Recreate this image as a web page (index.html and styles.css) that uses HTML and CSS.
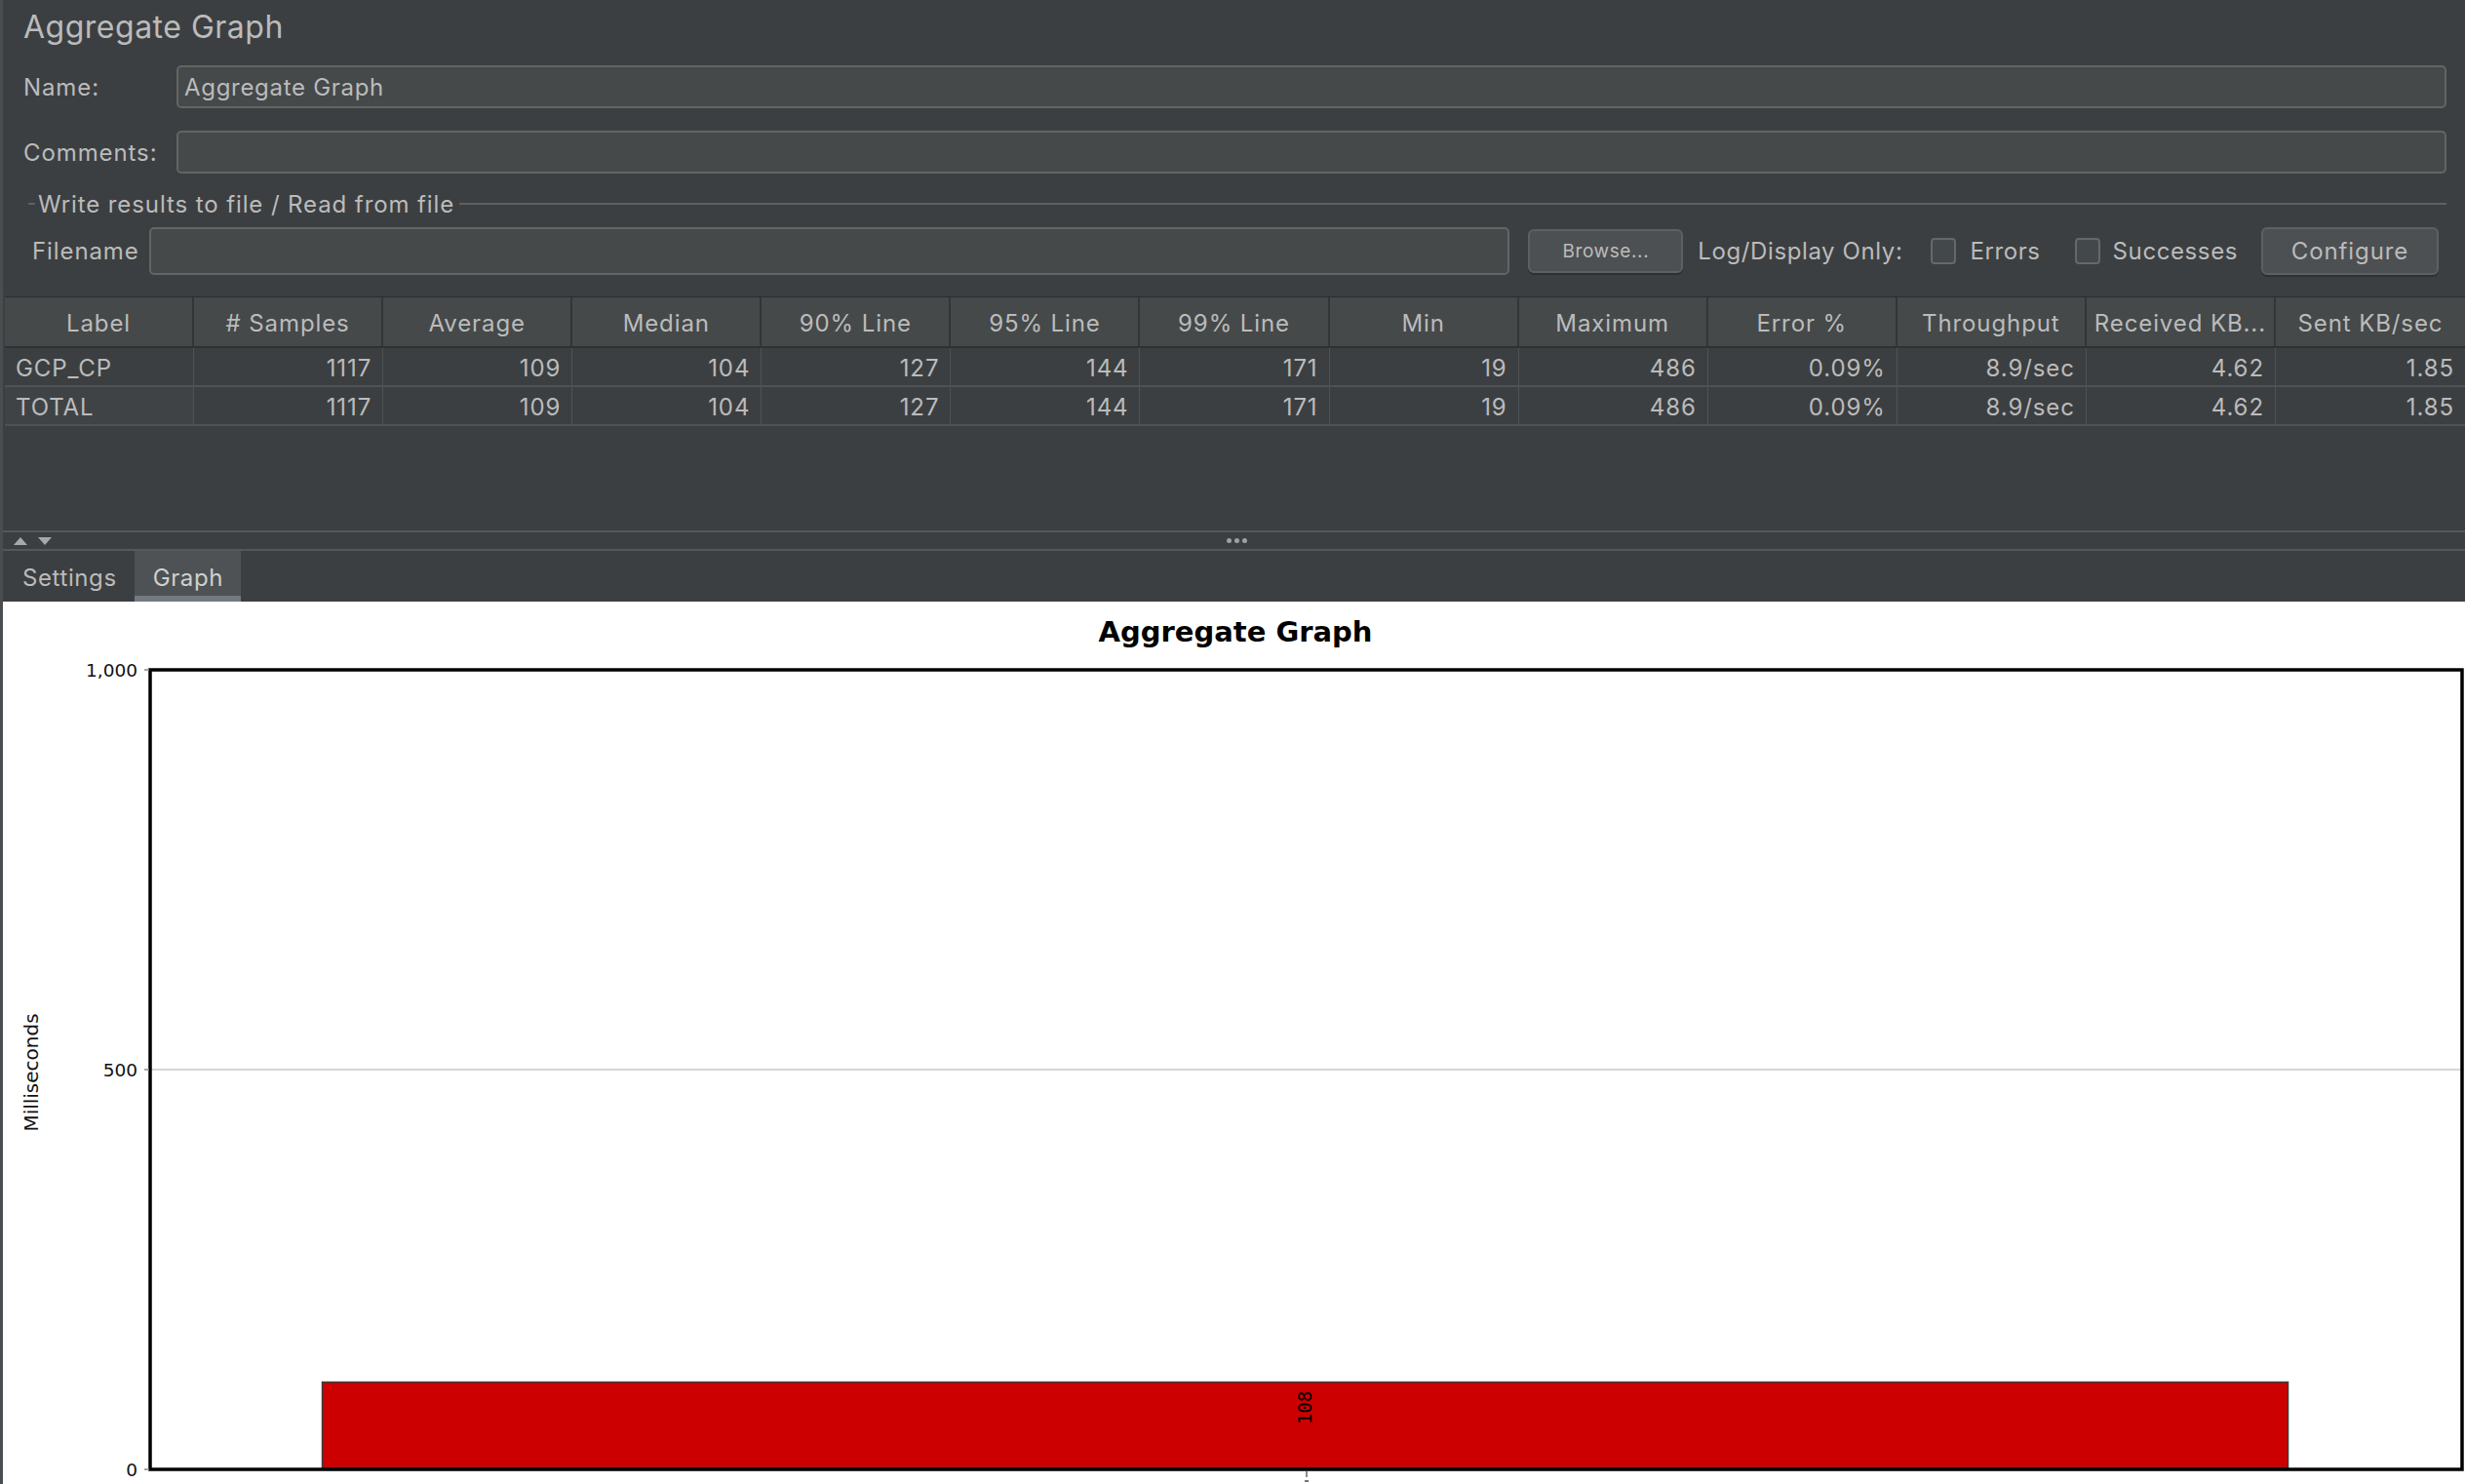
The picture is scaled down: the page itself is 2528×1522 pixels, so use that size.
FILE: index.html
```html
<!DOCTYPE html>
<html lang="en">
<head>
<meta charset="utf-8">
<title>Aggregate Graph</title>
<link rel="stylesheet" href="styles.css">
</head>
<body>
<div class="window">
  <div class="config">
    <div class="title">Aggregate Graph</div>
    <div class="form-row">
      <span class="lbl">Name:</span>
      <div class="field">Aggregate Graph</div>
    </div>
    <div class="form-row">
      <span class="lbl">Comments:</span>
      <div class="field"></div>
    </div>
    <div class="group">
      <div class="group-title">
        <span class="gline short"></span>
        <span class="gtext">Write results to file / Read from file</span>
        <span class="gline long"></span>
      </div>
      <div class="file-row">
        <span class="flabel">Filename</span>
        <div class="field ffield"></div>
        <button class="btn browse">Browse...</button>
        <span class="log">Log/Display Only:</span>
        <span class="cb cb1"></span><span class="cbl">Errors</span>
        <span class="cb cb2"></span><span class="cbl cbl2">Successes</span>
        <button class="btn configure">Configure</button>
      </div>
    </div>
  </div>

  <div class="table-area">
    <div class="trow thead">
      <div class="c">Label</div>
      <div class="c"># Samples</div>
      <div class="c">Average</div>
      <div class="c">Median</div>
      <div class="c">90% Line</div>
      <div class="c">95% Line</div>
      <div class="c">99% Line</div>
      <div class="c">Min</div>
      <div class="c">Maximum</div>
      <div class="c">Error %</div>
      <div class="c">Throughput</div>
      <div class="c">Received KB...</div>
      <div class="c">Sent KB/sec</div>
    </div>
    <div class="trow tbody">
      <div class="c label">GCP_CP</div>
      <div class="c">1117</div>
      <div class="c">109</div>
      <div class="c">104</div>
      <div class="c">127</div>
      <div class="c">144</div>
      <div class="c">171</div>
      <div class="c">19</div>
      <div class="c">486</div>
      <div class="c">0.09%</div>
      <div class="c">8.9/sec</div>
      <div class="c">4.62</div>
      <div class="c">1.85</div>
    </div>
    <div class="trow tbody">
      <div class="c label total">TOTAL</div>
      <div class="c">1117</div>
      <div class="c">109</div>
      <div class="c">104</div>
      <div class="c">127</div>
      <div class="c">144</div>
      <div class="c">171</div>
      <div class="c">19</div>
      <div class="c">486</div>
      <div class="c">0.09%</div>
      <div class="c">8.9/sec</div>
      <div class="c">4.62</div>
      <div class="c">1.85</div>
    </div>
  </div>

  <div class="splitter">
    <div class="arrows"><span class="tri up"></span><span class="tri down"></span></div>
    <div class="dots"><span></span><span></span><span></span></div>
    <div></div>
  </div>

  <div class="tabs">
    <div class="tab">Settings</div>
    <div class="tab active">Graph</div>
  </div>

  <div class="chart">
    <svg class="plot" width="2525" height="904" viewBox="0 0 2525 904">
      <text class="ctitle" x="1264" y="41" text-anchor="middle">Aggregate Graph</text>
      <line x1="152" y1="480" x2="2521" y2="480" stroke="#c8c8c8" stroke-width="1.6"/>
      <rect x="327.5" y="800.5" width="2016" height="88" fill="#cc0000" stroke="#3a3a3a" stroke-width="1.5"/>
      <rect x="151" y="70" width="2371" height="820" fill="none" stroke="#000" stroke-width="3.5"/>
      <line x1="145" y1="70" x2="150" y2="70" stroke="#888" stroke-width="1.5"/>
      <line x1="145" y1="480" x2="150" y2="480" stroke="#888" stroke-width="1.5"/>
      <line x1="145" y1="890" x2="150" y2="890" stroke="#888" stroke-width="1.5"/>
      <text class="tick" x="138" y="76.5" text-anchor="end">1,000</text>
      <text class="tick" x="138" y="486.5" text-anchor="end">500</text>
      <text class="tick" x="138" y="896.5" text-anchor="end">0</text>
      <text class="ylabel" transform="translate(36 483) rotate(-90)" text-anchor="middle">Milliseconds</text>
      <text class="barval" transform="translate(1342 844) rotate(-90)">108</text>
      <line x1="1337" y1="892" x2="1337" y2="898" stroke="#666" stroke-width="1.5"/>
      <line x1="1335" y1="902" x2="1339" y2="902" stroke="#444" stroke-width="1.5"/>
    </svg>
  </div>
</div>
</body>
</html>
```
FILE: styles.css
```css
* { box-sizing: border-box; }
html, body { margin: 0; padding: 0; }
body {
  background: #3c3f41;
  width: 2528px;
  height: 1522px;
  overflow: hidden;
  font-family: Inter, "Liberation Sans", sans-serif;
  color: #bbbbbb;
}
.window {
  height: 1522px;
  border-left: 3px solid #4b4e50;
  display: flex;
  flex-direction: column;
}
.config {
  flex: none;
  display: flex;
  flex-direction: column;
  padding: 0 19px 0 21px;
}
.title {
  height: 67px;
  padding-top: 8px;
  font-size: 32px;
  line-height: 40px;
  letter-spacing: 0.5px;
}
.form-row {
  display: flex;
  align-items: center;
  height: 44px;
}
.form-row + .form-row { margin-top: 23px; }
.lbl {
  width: 157px;
  font-size: 24px;
  letter-spacing: 0.9px;
}
.field {
  flex: 1;
  height: 100%;
  background: #45494a;
  border: 2px solid #646464;
  border-radius: 5px;
  font-size: 24px;
  letter-spacing: 0.7px;
  padding-left: 6px;
  display: flex;
  align-items: center;
}
.group { margin-top: 18px; }
.group-title {
  height: 26px;
  display: flex;
  align-items: center;
  padding-left: 5px;
}
.gline { height: 2px; background: #5e6062; }
.gline.short { width: 7px; }
.gline.long { flex: 1; }
.gtext {
  font-size: 24px;
  letter-spacing: 0.9px;
  margin: 0 5px 0 3px;
}
.file-row {
  margin-top: 11px;
  height: 49px;
  display: flex;
  align-items: center;
  padding-left: 9px;
  font-size: 24px;
  letter-spacing: 0.6px;
}
.flabel { width: 120px; letter-spacing: 0.9px; }
.ffield { height: 49px; }
.btn {
  font-family: inherit;
  color: #bbbbbb;
  background: #4c5052;
  border: 2px solid #5e6060;
  border-radius: 6px;
  box-shadow: 0 2px 0 #2e3032;
  padding: 0;
}
.browse {
  margin-left: 19px;
  width: 159px;
  height: 45px;
  font-size: 19px;
  letter-spacing: 0.6px;
}
.log { margin-left: 15px; }
.cb {
  width: 26px;
  height: 27px;
  border: 2px solid #666868;
  border-radius: 4px;
  background: #43494a;
  margin-left: 29px;
}
.cb2 { margin-left: 35px; }
.cbl { margin-left: 14px; }
.cbl2 { margin-left: 13px; }
.configure {
  margin-left: 24px;
  margin-right: 8px;
  width: 182px;
  height: 49px;
  font-size: 24px;
  letter-spacing: 0.9px;
}
.table-area {
  flex: none;
  margin-top: 22px;
  margin-left: 2px;
  height: 240px;
  border-top: 1px solid #2b2d2f;
  font-size: 24px;
  letter-spacing: 0.9px;
}
.trow {
  display: grid;
  grid-template-columns: repeat(13, 1fr);
}
.thead {
  height: 52px;
  background: #45494a;
  border-bottom: 2px solid #2f3133;
}
.thead .c {
  display: flex;
  align-items: center;
  justify-content: center;
  padding-top: 3px;
  border-right: 2px solid #333537;
  white-space: nowrap;
}
.tbody {
  height: 40px;
  border-bottom: 2px solid #4f5254;
}
.tbody .c {
  display: flex;
  align-items: center;
  justify-content: flex-end;
  padding-top: 2px;
  padding-right: 11px;
  border-right: 1px solid #505355;
}
.tbody .c.label {
  justify-content: flex-start;
  padding-left: 11px;
}
.tbody .c.total { background: #404345; }
.trow .c:last-child { border-right: none; }
.splitter {
  flex: none;
  height: 21px;
  border-top: 2px solid #55585a;
  border-bottom: 2px solid #55585a;
  display: grid;
  grid-template-columns: 1fr auto 1fr;
  align-items: center;
}
.arrows {
  display: flex;
  align-items: center;
  gap: 11px;
  padding-left: 11px;
}
.tri {
  width: 0;
  height: 0;
  border-left: 7px solid transparent;
  border-right: 7px solid transparent;
}
.tri.up { border-bottom: 8px solid #a8a8a8; }
.tri.down { border-top: 8px solid #a8a8a8; }
.dots {
  display: flex;
  gap: 3px;
  padding-left: 6px;
}
.dots span {
  width: 5px;
  height: 5px;
  border-radius: 50%;
  background: #a0a0a0;
}
.tabs {
  flex: none;
  height: 52px;
  display: flex;
  padding-left: 1px;
}
.tab {
  display: flex;
  align-items: center;
  padding: 3px 18px 0 19px;
  font-size: 24px;
  letter-spacing: 0.6px;
}
.tab.active {
  background: #4e5254;
  box-shadow: inset 0 -6px 0 #747a80;
  color: #d0d0d0;
}
.chart {
  flex: 1;
  background: #ffffff;
  overflow: hidden;
}
.plot { display: block; }
.ctitle {
  font-family: "DejaVu Sans", sans-serif;
  font-weight: bold;
  font-size: 29px;
  fill: #000;
}
.tick {
  font-family: "DejaVu Sans", sans-serif;
  font-size: 18.5px;
  fill: #111;
}
.ylabel {
  font-family: "DejaVu Sans", sans-serif;
  font-size: 20px;
  fill: #111;
}
.barval {
  font-family: "DejaVu Sans Mono", monospace;
  font-size: 19px;
  fill: #000;
}
```
